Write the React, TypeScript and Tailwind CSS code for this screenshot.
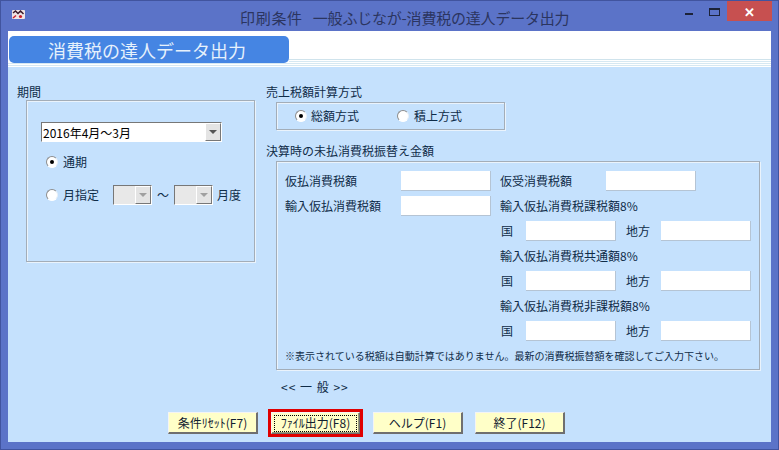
const FONT = '[font-family:"Noto_Sans_CJK_JP","Noto_Sans_CJK_SC",sans-serif]';
const GROUP = 'border border-[#a3adb8] shadow-[inset_1px_1px_0_#eaf3fc,1px_1px_0_#eaf3fc]';

function Radio({ checked }: { checked?: boolean }) {
  return (
    <span className="flex h-3 w-3 shrink-0 items-center justify-center rounded-full border border-t-[#8d8d8d] border-l-[#8d8d8d] border-r-[#e8f0f8] border-b-[#ffffff] bg-white">
      {checked && <span className="h-1 w-1 rounded-full bg-black" />}
    </span>
  );
}

function Arrow({ muted }: { muted?: boolean }) {
  return (
    <span className="flex w-[16px] shrink-0 items-center justify-center border border-t-white border-l-white border-r-[#777777] border-b-[#777777] bg-[#e4e4e4]">
      <span
        className={`h-0 w-0 border-x-[4px] border-t-[4px] border-x-transparent ${
          muted ? 'border-t-[#a0a0a0]' : 'border-t-[#555555]'
        }`}
      />
    </span>
  );
}

function Combo({ text, width, disabled }: { text?: string; width: string; disabled?: boolean }) {
  return (
    <div
      className={`flex h-[20px] shrink-0 border border-t-[#777777] border-l-[#777777] border-r-white border-b-white ${width} ${
        disabled ? 'bg-[#e8e8e8]' : 'bg-white'
      }`}
    >
      <span className="flex-1 pl-[1px] text-[12px] leading-[19px] text-black">{text}</span>
      <Arrow muted={disabled} />
    </div>
  );
}

function Field({ width = 'w-[90px]' }: { width?: string }) {
  return <div className={`h-[20px] shrink-0 border-r border-b border-r-[#b5c4d4] border-b-[#b5c4d4] bg-white ${width}`} />;
}

function AreaRow() {
  return (
    <div className="flex h-[20px] items-center">
      <span className="w-[26px] pl-[1px]">国</span>
      <Field />
      <span className="ml-[10px] w-[35px]">地方</span>
      <Field />
    </div>
  );
}

function AmountRow({ title }: { title: string }) {
  return (
    <div className="flex flex-col">
      <div className="flex h-[30px] items-center">{title}</div>
      <AreaRow />
    </div>
  );
}

function Btn({ label, focused }: { label: string; focused?: boolean }) {
  return (
    <button
      className={`flex h-[22px] items-center justify-center border border-t-[#f4f4f4] border-l-[#f4f4f4] border-r-[#6f6f6f] border-b-[#6f6f6f] bg-[#ffffc8] text-[12px] text-[#10202f] ${
        focused ? 'w-[89px] shadow-[inset_-1px_-1px_0_#9a9a7a]' : 'w-[90px] border-b-2 border-r-2'
      }`}
    >
      <span className={focused ? 'flex h-[17px] w-[83px] items-center justify-center border border-dotted border-black' : ''}>
        {label}
      </span>
    </button>
  );
}

export default function App() {
  return (
    <div className={`flex h-[450px] w-[779px] flex-col overflow-hidden border border-[#41549f] bg-[#5b73c8] text-[12px] text-[#0f2c48] ${FONT}`}>
      {/* Title bar */}
      <div className="flex h-[30px] shrink-0 items-start">
        <svg className="ml-[11px] mt-[9px] h-[9px] w-[13px]" viewBox="0 0 13 9">
          <rect width="13" height="9" rx="1" fill="#f0e4e4" />
          <path d="M1 3 3.5 1 6 3.5 8.5 1 11.5 4" fill="none" stroke="#3a1a2a" strokeWidth="1.5" />
          <path d="M1 8 4 5.5" stroke="#c8202c" strokeWidth="1.5" />
          <circle cx="8.5" cy="6.5" r="1.6" fill="#c8202c" />
        </svg>
        <div className="ml-[215px] mt-[7px] flex whitespace-nowrap text-[15px] leading-[20px] text-[#2b3560]">
          <span className="tracking-[0.7px]">印刷条件</span>
          <span className="ml-[10px] tracking-[-0.2px]">一般ふじなが-消費税の達人データ出力</span>
        </div>
        <div className="ml-auto flex items-start">
          <div className="mr-[16px] mt-[12px] h-[2px] w-[8px] bg-[#1c2238]" />
          <div className="mr-[7px] mt-[7px] h-[8px] w-[11px] border border-t-2 border-[#1c2238]" />
          <div className="flex h-[20px] w-[45px] items-center justify-center bg-[#c75050] text-[13px] font-bold leading-none text-white">✕</div>
          <div className="w-[6px]" />
        </div>
      </div>

      {/* Client area */}
      <div className="ml-[7px] flex h-[411px] w-[763px] shrink-0 flex-col bg-[#c5e1fd]">
        {/* Header */}
        <div className="flex h-[36px] shrink-0 flex-col bg-white">
          <div className="flex h-[32px] shrink-0">
            <div className="ml-[1px] mt-[5px] flex h-[27px] w-[280px] items-center rounded-[5px] bg-[#4585e3] pl-[39px] text-[18px] leading-none text-[#e6f1fc]">
              消費税の達人データ出力
            </div>
            <div className="flex flex-1 flex-col justify-end">
              <div className="h-[1px] bg-[#cfe3ec]" />
              <div className="h-[1px] bg-white" />
              <div className="h-[1px] bg-[#d6e8f2]" />
              <div className="h-[1px] bg-white" />
            </div>
          </div>
          <div className="h-[1px] bg-[#d6e8f2]" />
          <div className="h-[1px] bg-white" />
          <div className="h-[1px] bg-[#d6e8f2]" />
          <div className="h-[1px] bg-white" />
        </div>

        {/* Body */}
        <div className="flex h-[342px] shrink-0">
          <div className="flex w-[258px] shrink-0 flex-col pt-[17px]">
            <div className="ml-[9px] h-[16px] shrink-0 leading-[15px]">期間</div>
            <div className={`ml-[18px] flex h-[162px] w-[229px] shrink-0 flex-col pl-[14px] pt-[21px] ${GROUP}`}>
              <Combo text="2016年4月〜3月" width="w-[181px]" />
              <div className="ml-[5px] mt-[13px] flex h-[14px] items-center gap-[5px]">
                <Radio checked />
                <span>通期</span>
              </div>
              <div className="mt-[14px] flex h-[24px] items-center">
                <span className="ml-[5px]">
                  <Radio />
                </span>
                <span className="ml-[5px] w-[50px]">月指定</span>
                <Combo width="w-[39px]" disabled />
                <span className="w-[22px] text-center">〜</span>
                <Combo width="w-[39px]" disabled />
                <span className="ml-[4px]">月度</span>
              </div>
            </div>
          </div>

          <div className="flex flex-1 flex-col pt-[17px]">
            <div className="h-[18px] shrink-0 leading-[15px]">売上税額計算方式</div>
            <div className={`ml-[10px] flex h-[28px] w-[229px] shrink-0 items-center pl-[18px] ${GROUP}`}>
              <Radio checked />
              <span className="ml-[4px] w-[86px]">総額方式</span>
              <Radio />
              <span className="ml-[5px]">積上方式</span>
            </div>
            <div className="mt-[13px] h-[18px] shrink-0 leading-[15px]">決算時の未払消費税振替え金額</div>
            <div className={`ml-[10px] flex h-[209px] w-[484px] shrink-0 flex-col pl-[8px] pt-[9px] ${GROUP}`}>
              <div className="flex">
                <div className="flex w-[215px] shrink-0 flex-col gap-[5px]">
                  <div className="flex h-[20px] items-center">
                    <span className="w-[116px]">仮払消費税額</span>
                    <Field />
                  </div>
                  <div className="flex h-[20px] items-center">
                    <span className="w-[116px]">輸入仮払消費税額</span>
                    <Field />
                  </div>
                </div>
                <div className="flex flex-col">
                  <div className="flex h-[20px] items-center">
                    <span className="w-[106px]">仮受消費税額</span>
                    <Field />
                  </div>
                  <AmountRow title="輸入仮払消費税課税額8%" />
                  <AmountRow title="輸入仮払消費税共通額8%" />
                  <AmountRow title="輸入仮払消費税非課税額8%" />
                </div>
              </div>
              <div className="mt-[7px] whitespace-nowrap text-[10px] leading-[16px]">
                ※表示されている税額は自動計算ではありません。最新の消費税振替額を確認してご入力下さい。
              </div>
            </div>
            <div className="ml-[15px] mt-[9px] text-[12px] leading-[16px] tracking-[1px]">&lt;&lt; 一 般 &gt;&gt;</div>
          </div>
        </div>

        {/* Buttons */}
        <div className="flex shrink-0 items-center pl-[160px]">
          <Btn label="条件ﾘｾｯﾄ(F7)" />
          <div className="ml-[10px] border-[3px] border-[#e00000] p-0">
            <Btn label="ﾌｧｲﾙ出力(F8)" focused />
          </div>
          <div className="ml-[10px]">
            <Btn label="ヘルプ(F1)" />
          </div>
          <div className="ml-[12px]">
            <Btn label="終了(F12)" />
          </div>
        </div>
      </div>
    </div>
  );
}
